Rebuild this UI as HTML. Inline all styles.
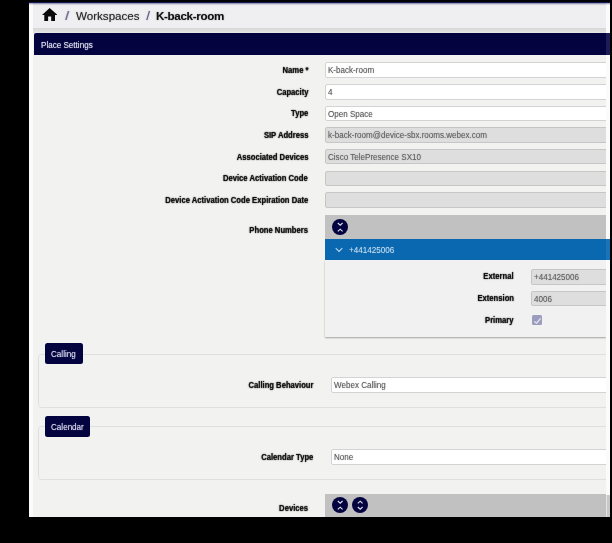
<!DOCTYPE html>
<html><head><meta charset="utf-8">
<style>
*{box-sizing:border-box;margin:0;padding:0}
html,body{width:612px;height:543px;background:#000;overflow:hidden;font-family:"Liberation Sans",sans-serif;}
#navy{position:absolute;left:29px;top:1.8px;width:581px;height:2.4px;background:#161650;filter:blur(0.7px)}
#app{position:absolute;left:29px;top:3px;width:581px;height:513.5px;background:#f2f2f1;overflow:hidden;}
#in{position:absolute;left:0;top:0;width:581px;height:514px;filter:blur(0.75px);}
#edgeL{position:absolute;left:0;top:0;width:4px;height:514px;background:linear-gradient(#8a8aa8 0,#d0d0dc 1px,#fbfbfb 2.5px)}
#edgeR{position:absolute;left:577px;top:0;width:4px;height:514px;background:linear-gradient(#8a8aa8 0,#d0d0dc 1px,#fbfbfb 2.5px)}
#crumb{position:absolute;left:0;top:0;width:581px;height:25px;background:linear-gradient(#7c7ca0 0,#b9b9cc 1px,#e6e6ec 2px,#efeff1 3px);}
#band{position:absolute;left:0;top:24.6px;width:581px;height:6.4px;background:linear-gradient(#d8d8d8,#dedede 45%,#ececec);}
#crumb span{position:absolute;top:6px;font-size:11.6px;color:#262626;text-shadow:0 0 1.2px rgba(40,40,40,0.55);white-space:nowrap}
#hdr{position:absolute;left:5px;top:30.3px;width:576px;height:22.1px;background:#03033f;color:#e4e4f4;font-size:9.2px;padding:6.5px 0 0 6.8px;border-radius:2px 0 0 0}
.w{display:inline-block;transform:scaleX(0.88);transform-origin:0 50%;text-shadow:0 0 1.2px rgba(220,220,245,0.6);white-space:nowrap}
.lbl{position:absolute;right:301.9px;font-size:9px;font-weight:bold;transform:scaleX(0.85);transform-origin:100% 50%;margin-top:-1.2px;color:rgba(0,0,0,0.78);-webkit-text-stroke:0.15px rgba(0,0,0,0.6);text-shadow:0 0 1.4px rgba(0,0,0,0.95);white-space:nowrap;text-align:right}
.inp{position:absolute;left:296px;width:284px;height:15.7px;background:#fff;border:1px solid #d3d3d3;border-radius:2px;font-size:9px;color:#5c5c5c;padding:2px 0 0 2.3px;line-height:normal;white-space:nowrap}
.t{display:inline-block;font-size:9px;transform:scaleX(0.895);transform-origin:0 50%;text-shadow:0 0 1.2px rgba(100,100,100,0.55)}
.inp.dis{background:#dedede;border-color:#c6c6c6;color:#626262}
.fs{position:absolute;left:9px;width:575px;border:1px solid #dfdfdf;border-radius:3.5px}
.btn{position:absolute;left:16px;height:21px;background:#03033f;color:#dcdcf0;font-size:9.2px;border-radius:2.5px;padding:6px 0 0 6.3px}
.bar{position:absolute;left:296.4px;width:280.6px;background:#c1c1c1}
svg{display:block}
.circ{position:absolute;width:16px;height:16px;border-radius:8px;background:#03033f}
</style></head><body>
<div id="navy"></div>
<div id="app"><div id="in">
 <div id="crumb">
  <svg style="position:absolute;left:13px;top:5px" width="15.3" height="13" viewBox="2 3 20 17"><path d="M10 20v-6h4v6h5v-8h3L12 3 2 12h3v8z" fill="#0a0a0a"/></svg>
  <span style="left:36.2px;top:4.5px;color:#5c5c96;font-size:13.5px">/</span>
  <span style="left:47px">Workspaces</span>
  <span style="left:117.2px;top:4.5px;color:#5c5c96;font-size:13.5px">/</span>
  <span style="left:127px;font-weight:bold;color:#111;letter-spacing:-0.33px">K-back-room</span>
 </div>
 <div id="band"></div>
 <div id="hdr"><span class="w">Place Settings</span></div>
 <div class="lbl" style="top:63.3px">Name *</div><div class="inp" style="top:59.3px"><span class="t">K-back-room</span></div>
 <div class="lbl" style="top:84.9px">Capacity</div><div class="inp" style="top:80.9px"><span class="t">4</span></div>
 <div class="lbl" style="top:106.6px">Type</div><div class="inp" style="top:102.6px"><span class="t">Open Space</span></div>
 <div class="lbl" style="top:128.2px">SIP Address</div><div class="inp dis" style="top:124.2px"><span class="t">k-back-room@device-sbx.rooms.webex.com</span></div>
 <div class="lbl" style="top:149.8px">Associated Devices</div><div class="inp dis" style="top:145.8px"><span class="t">Cisco TelePresence SX10</span></div>
 <div class="lbl" style="top:171.5px">Device Activation Code</div><div class="inp dis" style="top:167.5px"></div>
 <div class="lbl" style="top:193.1px">Device Activation Code Expiration Date</div><div class="inp dis" style="top:189.1px"></div>
 <div class="lbl" style="top:223px">Phone Numbers</div>

 <!-- phone numbers widget -->
 <div class="bar" style="top:212px;height:25px"></div>
 <div class="circ" style="left:302.7px;top:216px"><svg width="16" height="16" viewBox="0 0 16 16"><path d="M5.8 4 L8.2 6.2 L10.6 4 M5.8 12.4 L8.2 10.2 L10.6 12.4" stroke="#e0e0f2" stroke-width="1.15" fill="none"/></svg></div>
 <div style="position:absolute;left:296.4px;top:236.4px;width:285px;height:21px;background:#0968af"></div>
 <svg style="position:absolute;left:304.8px;top:243.2px" width="10" height="8" viewBox="0 0 10 8"><path d="M1.7 2.2 L5 5.4 L8.3 2.2" stroke="#bcd9f0" stroke-width="1.1" fill="none"/></svg>
 <div style="position:absolute;left:320px;top:242.2px;font-size:9.2px;color:#c2dbef;white-space:nowrap"><span class="w" style="text-shadow:0 0 1.2px rgba(190,215,240,0.5)">+441425006</span></div>
 <div style="position:absolute;left:296.4px;top:257.2px;width:280.6px;height:76.8px;background:#f1f1f1;box-shadow:0 1px 1.5px rgba(0,0,0,0.33)"></div>
 <div class="lbl" style="top:269.4px;right:96px">External</div><div class="inp dis" style="top:265.6px;left:502px;width:80px;height:16.4px"><span class="t">+441425006</span></div>
 <div class="lbl" style="top:291.6px;right:96px">Extension</div><div class="inp dis" style="top:287.8px;left:502px;width:80px;height:15.6px"><span class="t">4006</span></div>
 <div class="lbl" style="top:313.2px;right:96px">Primary</div>
 <div style="position:absolute;left:502.7px;top:311.6px;width:10.5px;height:10.8px;background:#9c9cbe;border-radius:1.5px"><svg width="10.5" height="10.8" viewBox="0 0 10.5 10.8"><path d="M2.2 6.4 L4.6 8.2 L8.6 3.3" stroke="#e6e6f4" stroke-width="1.25" fill="none"/></svg></div>

 <!-- calling -->
 <div class="fs" style="top:351px;height:54px"></div>
 <div class="btn" style="top:340.2px;width:37.8px"><span class="w">Calling</span></div>
 <div class="lbl" style="top:378.2px;right:296.5px">Calling Behaviour</div><div class="inp" style="top:374px;left:302px;width:280px"><span class="t">Webex Calling</span></div>

 <!-- calendar -->
 <div class="fs" style="top:423px;height:54px"></div>
 <div class="btn" style="top:412.6px;width:44.8px"><span class="w">Calendar</span></div>
 <div class="lbl" style="top:450.5px;right:296.5px">Calendar Type</div><div class="inp" style="top:446px;left:302px;width:280px"><span class="t">None</span></div>

 <!-- devices -->
 <div class="lbl" style="top:501px">Devices</div>
 <div class="bar" style="top:491px;height:30px;width:285px"></div>
 <div class="circ" style="left:302.8px;top:494px"><svg width="16" height="16" viewBox="0 0 16 16"><path d="M5.8 4 L8.2 6.2 L10.6 4 M5.8 12.4 L8.2 10.2 L10.6 12.4" stroke="#e0e0f2" stroke-width="1.15" fill="none"/></svg></div>
 <div class="circ" style="left:323px;top:494px"><svg width="16" height="16" viewBox="0 0 16 16"><path d="M5.8 6.4 L8.2 4.2 L10.6 6.4 M5.8 10 L8.2 12.2 L10.6 10" stroke="#e0e0f2" stroke-width="1.15" fill="none"/></svg></div>

 <div id="edgeL"></div><div id="edgeR"></div><div style="position:absolute;left:577px;top:491.5px;width:4px;height:24px;background:#c8c8c8;border-left:1px solid #e4e4e4"></div><div style="position:absolute;left:577px;top:236.4px;width:4px;height:21px;background:#1a74b6"></div><div style="position:absolute;left:577px;top:30.3px;width:4px;height:22.1px;background:#1d1d55"></div>
</div></div>
</body></html>
